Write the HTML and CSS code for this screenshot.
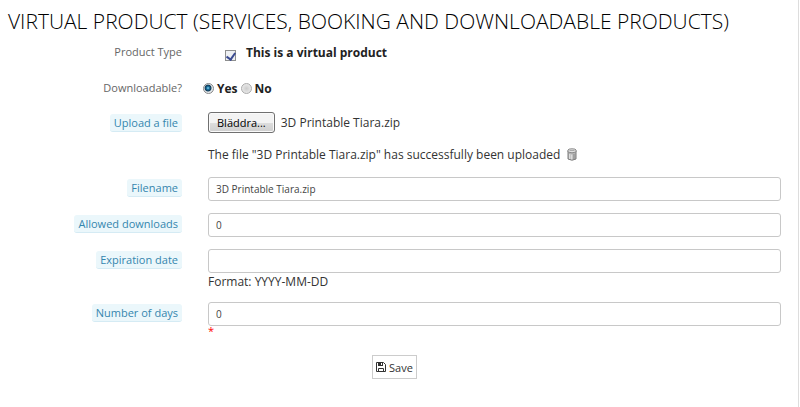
FILE: index.html
```html
<!DOCTYPE html>
<html lang="en">
  <head>
    <meta charset="UTF-8" />
    <meta name="viewport" content="width=device-width, initial-scale=1.0" />
    <title>Virtual Product</title>
    <link rel="stylesheet" href="styles.css">
  </head>
  <body>
    <main class="panel">
      <h1 class="panel-title">VIRTUAL PRODUCT (SERVICES, BOOKING AND DOWNLOADABLE PRODUCTS)</h1>

      <form class="product-form">
        <div class="row">
          <div class="row-label"><span class="plain">Product Type</span></div>
          <div class="field choices type-choice">
            <input type="checkbox" class="check" id="isVirtual" checked />
            <label for="isVirtual">This is a virtual product</label>
          </div>
        </div>

        <div class="row" role="radiogroup" aria-labelledby="downloadableLabel">
          <div class="row-label"><span class="plain" id="downloadableLabel">Downloadable?</span></div>
          <div class="field choices radio-choice">
            <input type="radio" class="radio" name="downloadable" id="downloadYes" value="1" checked />
            <label for="downloadYes">Yes</label>
            <input type="radio" class="radio" name="downloadable" id="downloadNo" value="0" />
            <label for="downloadNo">No</label>
          </div>
        </div>

        <div class="row">
          <div class="row-label"><label class="tip" for="uploadFile">Upload a file</label></div>
          <div class="field">
            <div class="file-line">
              <input type="file" id="uploadFile" hidden />
              <button type="button" class="browse" onclick="document.getElementById('uploadFile').click()">Bläddra...</button>
              <span>3D Printable Tiara.zip</span>
            </div>
            <div class="message">
              <span>The file "3D Printable Tiara.zip" has successfully been uploaded</span>
              <button type="button" class="delete" aria-label="Delete file">
                <svg width="10" height="13" viewBox="0 0 10 13">
                  <path d="M1 2.5 V11 Q5 13.4 9 11 V2.5 Z" fill="#b4b4b4" stroke="#7d7d7d" />
                  <path d="M2.8 6 V11 M4.8 6.5 V11.5" stroke="#ececec" />
                  <path d="M7 6 V11" stroke="#8d8d8d" />
                  <path d="M1 2 Q1 0.8 5 0.8 Q9 0.8 9 2 V4 Q5 5.6 1 4 Z" fill="#e6e6e6" stroke="#8a8a8a" />
                  <path d="M2.5 2.6 H7.5" stroke="#a5a5a5" />
                </svg>
              </button>
            </div>
          </div>
        </div>

        <div class="row">
          <div class="row-label"><label class="tip" for="filename">Filename</label></div>
          <div class="field">
            <input type="text" class="text-input" id="filename" value="3D Printable Tiara.zip" />
          </div>
        </div>

        <div class="row">
          <div class="row-label"><label class="tip" for="allowed">Allowed downloads</label></div>
          <div class="field">
            <input type="text" class="text-input" id="allowed" value="0" />
          </div>
        </div>

        <div class="row">
          <div class="row-label"><label class="tip" for="expiration">Expiration date</label></div>
          <div class="field">
            <input type="text" class="text-input" id="expiration" />
            <div class="hint">Format: YYYY-MM-DD</div>
          </div>
        </div>

        <div class="row">
          <div class="row-label"><label class="tip" for="days">Number of days</label></div>
          <div class="field">
            <input type="text" class="text-input" id="days" value="0" />
            <div class="required">*</div>
          </div>
        </div>

        <div class="actions">
          <button type="submit" class="save">
            <svg width="10" height="10" viewBox="0 0 10 10">
              <path d="M0.5 0.5 H7.5 L9.5 2.5 V9.5 H0.5 Z" fill="#fff" stroke="#333" />
              <path d="M2 0.5 H7 V4 H2 Z" fill="#333" />
              <path d="M5 1 H6 V3 H5 Z" fill="#fff" />
              <path d="M2.5 9.5 V6.5 H7.5 V9.5" fill="none" stroke="#333" />
            </svg>
            Save
          </button>
        </div>
      </form>
    </main>
  </body>
</html>
```

FILE: styles.css
```css
* {
  box-sizing: border-box;
}

body {
  margin: 0;
  background: #fff;
  color: #333;
  font-family: "Open Sans", sans-serif;
  font-size: 12px;
}

button,
input {
  margin: 0;
  color: inherit;
  font-family: inherit;
  font-size: 11px;
}

.panel {
  min-height: 100vh;
  margin-right: 1px;
  padding: 6px 17px 0 8px;
  border-right: 1px solid #ddd;
}

.panel-title {
  margin: 0 0 4px;
  color: #000;
  font-size: 21px;
  font-weight: 300;
  line-height: 30px;
}

.product-form {
  display: flex;
  flex-direction: column;
  gap: 12px;
}

.row {
  display: grid;
  grid-template-columns: 174px 1fr;
  column-gap: 26px;
  align-items: start;
}

.row-label {
  display: flex;
  justify-content: flex-end;
  padding-top: 2px;
  font-size: 11px;
  line-height: 17px;
}

.plain {
  padding-top: 1px;
  color: #666;
}

.tip {
  padding: 0 4px;
  border-bottom: 1px solid #d5ebf4;
  border-radius: 3px;
  background: #ebf7fb;
  color: #3586ae;
}

.choices {
  display: flex;
  align-items: center;
  height: 24px;
  color: #222;
  font-weight: 700;
}

.type-choice {
  gap: 10px;
  padding-left: 17px;
}

.radio-choice {
  gap: 3px;
  margin-left: -5px;
}

.check {
  appearance: none;
  display: flex;
  justify-content: center;
  align-self: flex-end;
  width: 11px;
  height: 11px;
  margin-bottom: 3px;
  border: 1px solid #8e8f8f;
  background: #eef0f3;
}

.check:checked::before {
  content: "";
  width: 4px;
  height: 7px;
  border: solid #3b4b91;
  border-width: 0 2px 2px 0;
  transform: rotate(35deg);
}

.radio {
  appearance: none;
  width: 11px;
  height: 11px;
  border: 1px solid #aaa;
  border-radius: 50%;
  background: radial-gradient(circle, #ccc, #f2f2f2);
}

.radio:checked {
  border-color: #888;
  background: radial-gradient(circle at 45% 45%, #8fdcf5 0, #1a6f9d 22%, #123a56 42%, #e4e9ec 56%);
}

.file-line {
  display: flex;
  align-items: center;
  gap: 6px;
  height: 21px;
}

.browse {
  height: 21px;
  padding: 0 8px;
  border: 1px solid #707070;
  border-radius: 3px;
  background: linear-gradient(#f3f3f3 50%, #dedede 50%, #cfcfcf);
  box-shadow: inset 0 0 0 1px #fafafa;
  color: #000;
}

.message {
  display: flex;
  align-items: center;
  gap: 7px;
  height: 21px;
  margin-top: 11px;
}

.delete {
  display: flex;
  padding: 0;
  border: 0;
  background: none;
}

.text-input {
  display: block;
  width: 100%;
  height: 24px;
  padding: 0 7px;
  border: 1px solid #c8c8c8;
  border-radius: 3px;
  background: #fff;
  color: #444;
  font-size: 10px;
}

.hint {
  line-height: 17px;
}

.required {
  color: #f00;
  font-size: 11px;
  line-height: 10px;
}

.actions {
  display: flex;
  justify-content: center;
  padding-top: 7px;
}

.save {
  display: flex;
  align-items: center;
  gap: 3px;
  height: 24px;
  padding: 0 3px;
  border: 1px solid #ccc;
  background: #fff;
}
```
